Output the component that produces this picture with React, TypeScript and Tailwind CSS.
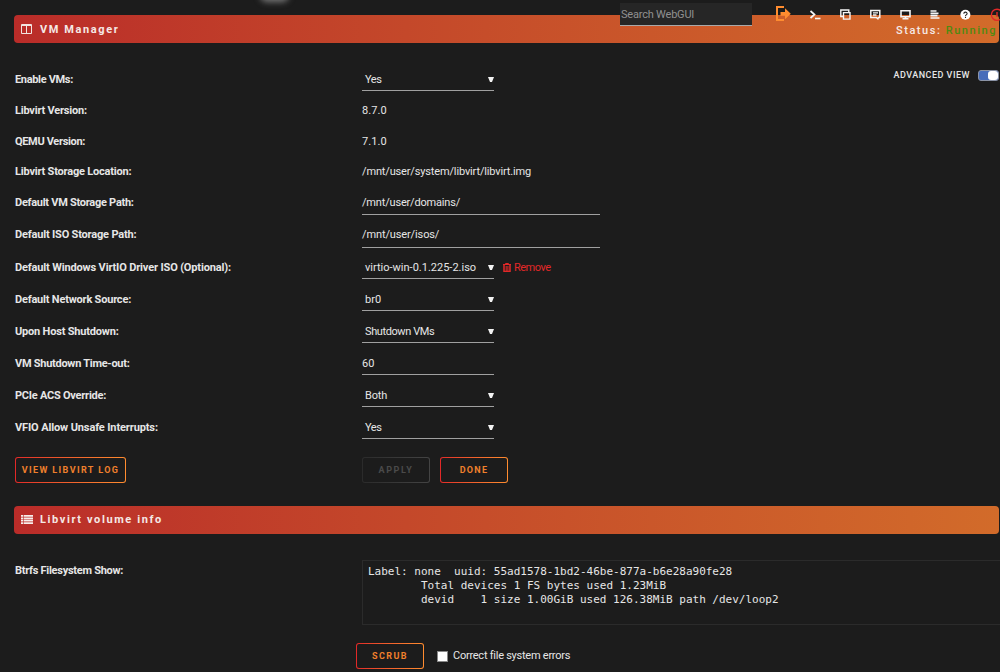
import type { ReactNode } from 'react';

const SANS = "font-['Roboto','Open_Sans',sans-serif]";

interface Setting {
  label: string;
  value: string;
  kind: 'text' | 'select' | 'input' | 'path';
  height: string;
  labelTracking: string;
  valueTracking: string;
}

const settings: Setting[] = [
  { label: 'Enable VMs:', value: 'Yes', kind: 'select', height: 'h-8', labelTracking: 'tracking-[-0.33px]', valueTracking: 'tracking-[-0.4px]' },
  { label: 'Libvirt Version:', value: '8.7.0', kind: 'text', height: 'h-[31px]', labelTracking: 'tracking-[-0.21px]', valueTracking: 'tracking-[0.1px]' },
  { label: 'QEMU Version:', value: '7.1.0', kind: 'text', height: 'h-[30px]', labelTracking: 'tracking-[-0.33px]', valueTracking: 'tracking-[0.1px]' },
  { label: 'Libvirt Storage Location:', value: '/mnt/user/system/libvirt/libvirt.img', kind: 'text', height: 'h-[30px]', labelTracking: 'tracking-[-0.2px]', valueTracking: 'tracking-[-0.15px]' },
  { label: 'Default VM Storage Path:', value: '/mnt/user/domains/', kind: 'path', height: 'h-8', labelTracking: 'tracking-[-0.27px]', valueTracking: 'tracking-[-0.18px]' },
  { label: 'Default ISO Storage Path:', value: '/mnt/user/isos/', kind: 'path', height: 'h-[33px]', labelTracking: 'tracking-[-0.18px]', valueTracking: 'tracking-[-0.12px]' },
  { label: 'Default Windows VirtIO Driver ISO (Optional):', value: 'virtio-win-0.1.225-2.iso', kind: 'select', height: 'h-8', labelTracking: 'tracking-[-0.15px]', valueTracking: 'tracking-[0px]' },
  { label: 'Default Network Source:', value: 'br0', kind: 'select', height: 'h-8', labelTracking: 'tracking-[-0.2px]', valueTracking: 'tracking-[0.1px]' },
  { label: 'Upon Host Shutdown:', value: 'Shutdown VMs', kind: 'select', height: 'h-8', labelTracking: 'tracking-[-0.19px]', valueTracking: 'tracking-[-0.4px]' },
  { label: 'VM Shutdown Time-out:', value: '60', kind: 'input', height: 'h-8', labelTracking: 'tracking-[-0.27px]', valueTracking: 'tracking-[0.1px]' },
  { label: 'PCIe ACS Override:', value: 'Both', kind: 'select', height: 'h-8', labelTracking: 'tracking-[-0.24px]', valueTracking: 'tracking-[-0.2px]' },
  { label: 'VFIO Allow Unsafe Interrupts:', value: 'Yes', kind: 'select', height: 'h-8', labelTracking: 'tracking-[-0.12px]', valueTracking: 'tracking-[-0.4px]' },
];

const fsInfo = `Label: none  uuid: 55ad1578-1bd2-46be-877a-b6e28a90fe28
        Total devices 1 FS bytes used 1.23MiB
        devid    1 size 1.00GiB used 126.38MiB path /dev/loop2`;

function ColumnsIcon() {
  return (
    <svg width="11" height="10" viewBox="0 0 11 10" fill="none" stroke="#f2e4e0">
      <path d="M.5 1.5h10M.5 .5h10v9h-10zM5.5 1v8" />
    </svg>
  );
}

function ListIcon() {
  return (
    <svg className="-mt-px" width="12" height="9" viewBox="0 0 12 9" fill="#f7eeec">
      <path d="M0 0h2v1.8H0zM0 2.4h2v1.8H0zM0 4.8h2v1.8H0zM0 7.2h2V9H0zM2.6 0H12v1.8H2.6zM2.6 2.4H12v1.8H2.6zM2.6 4.8H12v1.8H2.6zM2.6 7.2H12V9H2.6z" />
    </svg>
  );
}

function TrashIcon() {
  return (
    <svg className="-mt-px" width="8" height="9" viewBox="0 0 8 9" fill="none" stroke="#e22828">
      <path d="M0 1.5h8M2.5 1.5v-1h3v1" />
      <path d="M1 2v6.5h6V2" strokeWidth="1.5" />
      <path d="M3.2 3v5M4.9 3v5" />
    </svg>
  );
}

function Toolbar() {
  return (
    <div className="absolute top-[3px] left-[620px] flex w-[380px] items-start overflow-hidden">
      <div className="h-[23px] w-[132px] border-b border-[#a9a9a9] bg-[#262626] pl-px text-[11px] leading-[23px] text-[#909090]">
        <span className="tracking-[-0.2px]">Search WebGUI</span>
      </div>
      <svg width="248" height="28" viewBox="752 3 248 28" fill="none">
        {/* Log out */}
        <path d="M784 7h-7v13h7" stroke="#ff8c2f" strokeWidth="2" />
        <path d="M780.5 12h4.5V8.3l5.8 5.5-5.8 5.5v-3.6h-4.5z" fill="#ff8c2f" />
        <g stroke="#f5f5f5">
          {/* Terminal */}
          <path d="M810.5 11l4 3.5-4 3.5" strokeWidth="1.7" />
          <path d="M815 18.5h5.5" strokeWidth="1.6" />
          {/* File manager */}
          <path d="M842.8 16.5h-2v-6.5h8v2M843.5 12.6h6.5v6.5h-6.5z" strokeWidth="1.4" />
          {/* Feedback */}
          <path d="M870.8 10.5h9v7h-1.3l-.6 1.3-1.6-1.3h-5.5z" strokeWidth="1.5" />
          <path d="M873 12.8h5M873 15h3.5" strokeWidth="1.3" />
          {/* System info */}
          <path d="M901 10.8h9v6h-9z" strokeWidth="1.6" />
          <path d="M902.5 18.8h6M905.5 17v2" strokeWidth="1.6" />
          {/* Log */}
          <path d="M930.5 11h6M930.5 13.3h8M930.5 15.6h7M930.5 18h9" strokeWidth="1.7" />
        </g>
        <circle cx="965.4" cy="14.8" r="5" fill="#fff" />
        <path d="M963.8 13.7c.1-2.2 3.4-2 3.3 0 0 1.2-1.6 1.1-1.6 2.2M965.5 16.8v1.1" stroke="#222" strokeWidth="1.1" />
        <circle cx="997" cy="14.8" r="5.6" stroke="#e22828" strokeWidth="1.4" />
        <path d="M997 12v5" stroke="#e22828" strokeWidth="1.4" />
      </svg>
    </div>
  );
}

function TitleBar({ icon, title, children }: { icon: ReactNode; title: ReactNode; children?: ReactNode }) {
  return (
    <div className="ml-3.5 flex h-7 w-[985px] items-center rounded bg-linear-to-r from-[#ba2c29] to-[#d26b2a] pl-[7px] text-[#f5e9e6]">
      {icon}
      {title}
      {children}
    </div>
  );
}

function GradientButton({ children, className, disabled }: { children: ReactNode; className: string; disabled?: boolean }) {
  return (
    <button
      className={`block h-[26px] rounded-[3px] p-px ${
        disabled ? 'bg-linear-to-r from-[#2b2b2b] to-[#444] text-[#4a4a4a]' : 'bg-linear-to-r from-[#e22828] to-[#ff8c2f] text-[#f0802c]'
      } ${className}`}
    >
      <span className="flex h-full items-center justify-center rounded-[2px] bg-[#1c1c1c] pt-px text-[9px] font-bold whitespace-nowrap">
        {children}
      </span>
    </button>
  );
}

function Field({ setting }: { setting: Setting }) {
  if (setting.kind === 'text') {
    return <span className={`pt-[2px] ${setting.valueTracking}`}>{setting.value}</span>;
  }
  const isSelect = setting.kind === 'select';
  return (
    <div
      className={`flex items-center justify-between border-b border-[#a0a0a0] ${
        setting.kind === 'path' ? 'h-[26px] w-[238px]' : 'h-6 w-[132px]'
      } ${isSelect ? 'pl-[3px]' : ''}`}
    >
      <span className={`pt-[3px] ${setting.valueTracking}`}>{setting.value}</span>
      {isSelect && (
        <svg className="mt-[2px]" width="6" height="5" viewBox="0 0 6 5" fill="#f2f2f2">
          <path d="M0 0h6L4 5H2z" />
        </svg>
      )}
    </div>
  );
}

export default function App() {
  return (
    <div className={`relative h-[672px] w-[1000px] overflow-hidden bg-[#1c1c1c] pt-[15px] text-[11px] text-[#e6e6e6] ${SANS}`}>
      <div className="absolute -top-[9px] left-[263px] h-[8px] w-[23px] rounded-full bg-[#777] shadow-[0_0_6px_3px_#777]" />

      <TitleBar
        icon={<ColumnsIcon />}
        title={<h1 className="ml-2 pt-[2px] font-bold tracking-[1.6px]">VM Manager</h1>}
      >
        <p className="mt-[4px] ml-auto pr-[2px] font-medium tracking-[1.55px]">
          Status: <span className="text-[#4f8a10]">Running</span>
        </p>
      </TitleBar>
      <Toolbar />

      <div className="flex h-[414px] justify-between pt-5">
        <div className="w-[700px]">
          {settings.map((setting) => (
            <div key={setting.label} className={`flex items-center pl-[15px] ${setting.height}`}>
              <div className={`w-[347px] shrink-0 pt-[2px] font-bold ${setting.labelTracking}`}>{setting.label}</div>
              <Field setting={setting} />
              {setting.value.startsWith('virtio') && (
                <a className="ml-[9px] flex items-center gap-[3px] pt-[2px] text-[#e22828]">
                  <TrashIcon />
                  <span className="tracking-[-0.5px]">Remove</span>
                </a>
              )}
            </div>
          ))}
        </div>
        <div className="flex h-6 items-center pr-px">
          <span className="mr-[8px] pt-px text-[9px] font-medium tracking-[0.5px]">ADVANCED VIEW</span>
          <span className="flex h-[11px] w-[21px] justify-end rounded-[3px] border border-[#8b93a5] bg-[#486dba]">
            <span className="w-[10px] rounded-[3px] bg-white" />
          </span>
        </div>
      </div>

      <div className="flex h-[49px] pl-[15px]">
        <div className="w-[347px]">
          <GradientButton className="w-[111px] tracking-[1.4px]">VIEW LIBVIRT LOG</GradientButton>
        </div>
        <div className="flex gap-[10px]">
          <GradientButton className="w-[68px] tracking-[1.6px]" disabled>
            APPLY
          </GradientButton>
          <GradientButton className="w-[68px] tracking-[1.3px]">DONE</GradientButton>
        </div>
      </div>

      <TitleBar icon={<ListIcon />} title={<h2 className="ml-[7px] pt-px font-bold tracking-[1.6px]">Libvirt volume info</h2>} />

      <div className="mt-[26px] flex pl-[15px]">
        <div className="w-[347px] shrink-0 pt-[3px] font-bold tracking-[-0.27px]">Btrfs Filesystem Show:</div>
        <pre className="h-[65px] w-[640px] shrink-0 border border-[#2b2b2b] pt-1 pl-[5px] font-['DejaVu_Sans_Mono',monospace] text-[11px] leading-[14px]">
          {fsInfo}
        </pre>
      </div>

      <div className="mt-[18px] flex items-center pl-[356px]">
        <GradientButton className="w-[68px] tracking-[1.4px]">SCRUB</GradientButton>
        <span className="ml-[13px] size-[11px] border border-[#888] bg-white" />
        <span className="ml-[5px] tracking-[-0.25px]">Correct file system errors</span>
      </div>
    </div>
  );
}
